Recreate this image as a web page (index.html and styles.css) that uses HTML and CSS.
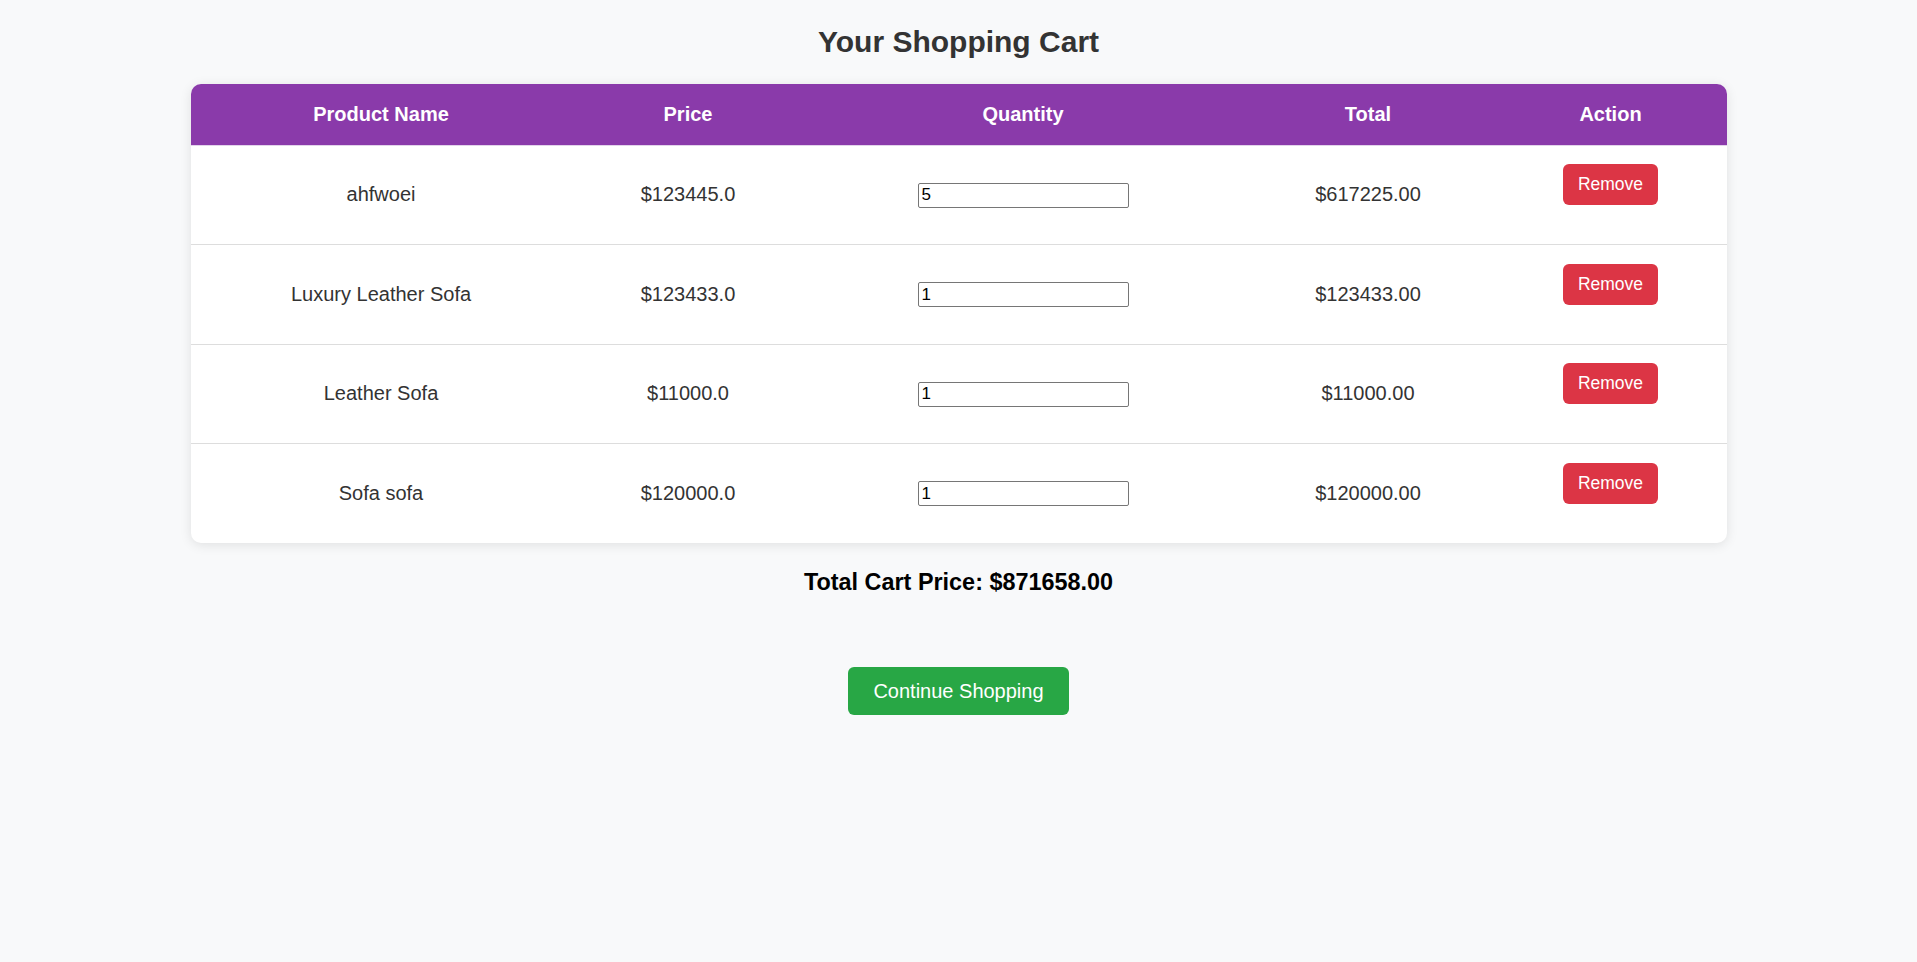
FILE: index.html
```html
<!DOCTYPE html>
<html lang="en">
<head>
<meta charset="utf-8">
<title>Your Shopping Cart</title>
<link rel="stylesheet" href="styles.css">
</head>
<body>
<h2 class="title">Your Shopping Cart</h2>
<div class="cart-card">
  <table class="cart-table">
    <colgroup>
      <col class="c-name"><col class="c-price"><col class="c-qty"><col class="c-total"><col class="c-action">
    </colgroup>
    <thead>
      <tr><th>Product Name</th><th>Price</th><th>Quantity</th><th>Total</th><th>Action</th></tr>
    </thead>
    <tbody>
      <tr>
        <td>ahfwoei</td><td>$123445.0</td>
        <td><input class="qty" type="text" value="5"></td>
        <td>$617225.00</td>
        <td><form class="rm-form"><button type="button" class="btn-remove">Remove</button></form></td>
      </tr>
      <tr>
        <td>Luxury Leather Sofa</td><td>$123433.0</td>
        <td><input class="qty" type="text" value="1"></td>
        <td>$123433.00</td>
        <td><form class="rm-form"><button type="button" class="btn-remove">Remove</button></form></td>
      </tr>
      <tr>
        <td>Leather Sofa</td><td>$11000.0</td>
        <td><input class="qty" type="text" value="1"></td>
        <td>$11000.00</td>
        <td><form class="rm-form"><button type="button" class="btn-remove">Remove</button></form></td>
      </tr>
      <tr class="last">
        <td>Sofa sofa</td><td>$120000.0</td>
        <td><input class="qty" type="text" value="1"></td>
        <td>$120000.00</td>
        <td><form class="rm-form"><button type="button" class="btn-remove">Remove</button></form></td>
      </tr>
    </tbody>
  </table>
</div>
<h3 class="grand-total">Total Cart Price: $871658.00</h3>
<div class="actions">
  <a class="btn-continue" href="#">Continue Shopping</a>
</div>
</body>
</html>
```
FILE: styles.css
```css
html, body {
  margin: 0;
  padding: 0;
}
body {
  background: #f8f9fa;
  font-family: "Liberation Sans", Arial, sans-serif;
  font-size: 20px;
  color: #333;
}
.title {
  font-size: 30px;
  font-weight: bold;
  color: #333;
  text-align: center;
  margin: 24.5px 0 25px;
  line-height: normal;
}
.cart-card {
  width: 1536px;
  margin: 0 auto;
  background: #fff;
  border-radius: 10px;
  overflow: hidden;
  box-shadow: 0 2px 12px rgba(0, 0, 0, 0.1);
}
.cart-table {
  width: 100%;
  border-collapse: collapse;
  table-layout: fixed;
}
.c-name { width: 381px; }
.c-price { width: 233px; }
.c-qty { width: 437px; }
.c-total { width: 253px; }
.c-action { width: 232px; }
.cart-table th {
  background: #8a3aaa;
  color: #fff;
  font-weight: bold;
  font-size: 20px;
  padding: 19px 10px;
  text-align: center;
  line-height: 23px;
  border-bottom: 1px solid #e2d3ea;
}
.cart-table td {
  padding: 18.5px 10px;
  text-align: center;
  vertical-align: middle;
  border-bottom: 1px solid #ddd;
  color: #333;
  font-size: 20px;
}
.cart-table tr.last td {
  border-bottom: none;
}
.qty {
  width: 211px;
  height: 25px;
  box-sizing: border-box;
  padding: 1px 3px;
  border: 1px solid #767676;
  border-radius: 2px;
  font-family: "Liberation Sans", Arial, sans-serif;
  font-size: 17px;
  color: #000;
  background: #fff;
}
.rm-form {
  margin: 0 0 20.5px;
}
.btn-remove {
  background: #dc3545;
  color: #fff;
  border: none;
  border-radius: 6px;
  padding: 10px 15px;
  font-family: "Liberation Sans", Arial, sans-serif;
  font-size: 17.5px;
  line-height: 21px;
  cursor: pointer;
}
.grand-total {
  text-align: center;
  font-size: 23.4px;
  font-weight: bold;
  color: #000;
  margin: 26.5px 0 0;
  line-height: 27px;
}
.actions {
  display: flex;
  justify-content: center;
  margin-top: 71px;
}
.btn-continue {
  display: inline-block;
  background: #28a745;
  color: #fff;
  text-decoration: none;
  font-size: 20px;
  line-height: 23px;
  padding: 12.5px 25px;
  border-radius: 6px;
}
```
